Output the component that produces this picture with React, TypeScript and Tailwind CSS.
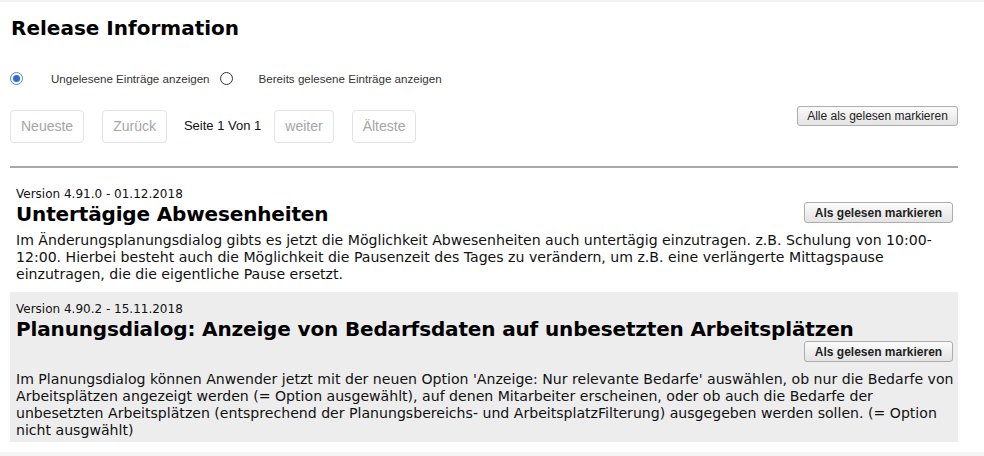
import React from "react";

const verdana = { fontFamily: '"DejaVu Sans", Verdana, sans-serif' };

function Radio({ checked }: { checked?: boolean }) {
  return (
    <span
      className={
        "flex h-[13px] w-[13px] shrink-0 items-center justify-center rounded-full border bg-white " +
        (checked ? "border-[#4f86d6]" : "border-[#333]")
      }
    >
      {checked && <span className="h-[7px] w-[7px] rounded-full bg-[#2d6fcf]" />}
    </span>
  );
}

function PageButton({ label }: { label: string }) {
  return (
    <button className="h-[33px] rounded-[4px] border border-[#e3e3e3] bg-white px-[10px] text-[14px] text-[#a6a6a6] font-['Liberation_Sans',Arial,sans-serif]">
      {label}
    </button>
  );
}

function MarkButton() {
  return (
    <button className="block h-[21px] w-[149px] shrink-0 rounded-[3px] border border-[#adadad] bg-gradient-to-b from-[#fbfbfb] to-[#e3e3e3] text-[12px] font-bold text-[#222] font-['Liberation_Sans',Arial,sans-serif]">
      Als gelesen markieren
    </button>
  );
}

type Entry = {
  version: string;
  title: string;
  lines: string[];
  shaded?: boolean;
};

const entries: Entry[] = [
  {
    version: "Version 4.91.0 - 01.12.2018",
    title: "Untertägige Abwesenheiten",
    lines: [
      "Im Änderungsplanungsdialog gibts es jetzt die Möglichkeit Abwesenheiten auch untertägig einzutragen. z.B. Schulung von 10:00-",
      "12:00. Hierbei besteht auch die Möglichkeit die Pausenzeit des Tages zu verändern, um z.B. eine verlängerte Mittagspause",
      "einzutragen, die die eigentliche Pause ersetzt.",
    ],
  },
  {
    version: "Version 4.90.2 - 15.11.2018",
    title: "Planungsdialog: Anzeige von Bedarfsdaten auf unbesetzten Arbeitsplätzen",
    lines: [
      "Im Planungsdialog können Anwender jetzt mit der neuen Option 'Anzeige: Nur relevante Bedarfe' auswählen, ob nur die Bedarfe von",
      "Arbeitsplätzen angezeigt werden (= Option ausgewählt), auf denen Mitarbeiter erscheinen, oder ob auch die Bedarfe der",
      "unbesetzten Arbeitsplätzen (entsprechend der Planungsbereichs- und ArbeitsplatzFilterung) ausgegeben werden sollen. (= Option",
      "nicht ausgwählt)",
    ],
    shaded: true,
  },
];

export default function App() {
  return (
    <div className="flex h-[456px] w-[984px] flex-col overflow-hidden bg-white text-black">
      <div className="h-[2px] shrink-0 bg-[#f2f2f2]" />

      <main className="flex flex-1 flex-col pl-[10px] pr-[26px]">
        {/* Header */}
        <h1 className="mt-[14px] pl-[1px] text-[20px] font-bold leading-[24px]" style={verdana}>
          Release Information
        </h1>

        {/* Filter */}
        <div className="mt-[31px] flex items-center text-[11.6px] leading-[15px] text-[#333] font-['Liberation_Sans',Arial,sans-serif]">
          <Radio checked />
          <span className="ml-[28px]">Ungelesene Einträge anzeigen</span>
          <span className="ml-[10px]">
            <Radio />
          </span>
          <span className="ml-[26px]">Bereits gelesene Einträge anzeigen</span>
        </div>

        {/* Pagination */}
        <div className="mt-[20px] flex items-start">
          <div className="mt-[4px] flex items-center">
            <PageButton label="Neueste" />
            <span className="ml-[18px]">
              <PageButton label="Zurück" />
            </span>
            <span className="ml-[17px] mr-[13px] -mt-[2px] text-[13px] text-[#111] font-['Liberation_Sans',Arial,sans-serif]">
              Seite 1 Von 1
            </span>
            <PageButton label="weiter" />
            <span className="ml-[18px]">
              <PageButton label="Älteste" />
            </span>
          </div>
          <button className="ml-auto h-[20px] w-[161px] rounded-[3px] border border-[#adadad] bg-gradient-to-b from-[#fbfbfb] to-[#e3e3e3] text-[12px] text-[#222] font-['Liberation_Sans',Arial,sans-serif]">
            Alle als gelesen markieren
          </button>
        </div>

        <div className="mt-[23px] h-[2px] bg-[#a9a9a9]" />

        {/* Entries */}
        <div className="mt-[9px] flex flex-col gap-[6px]">
          {entries.map((e) => (
            <section
              key={e.version}
              className={"pl-[6px] pr-[5px] pt-[10px] pb-[3px] " + (e.shaded ? "bg-[#ededed]" : "")}
              style={verdana}
            >
              <div className="text-[12px] leading-[15px] text-[#111]">{e.version}</div>
              <div className="flex flex-wrap items-start">
                <h2 className="text-[20px] font-bold leading-[24px] tracking-[-0.15px]">{e.title}</h2>
                <div className="ml-auto flex h-[24px] items-start">
                  <MarkButton />
                </div>
              </div>
              <p className="mt-[6px] whitespace-nowrap text-[14.1px] leading-[17px] text-[#111]">
                {e.lines.map((l, i) => (
                  <React.Fragment key={i}>
                    {l}
                    {i < e.lines.length - 1 && <br />}
                  </React.Fragment>
                ))}
              </p>
            </section>
          ))}
        </div>
      </main>

      <div className="h-[4px] shrink-0 bg-[#f5f5f5]" />
    </div>
  );
}
